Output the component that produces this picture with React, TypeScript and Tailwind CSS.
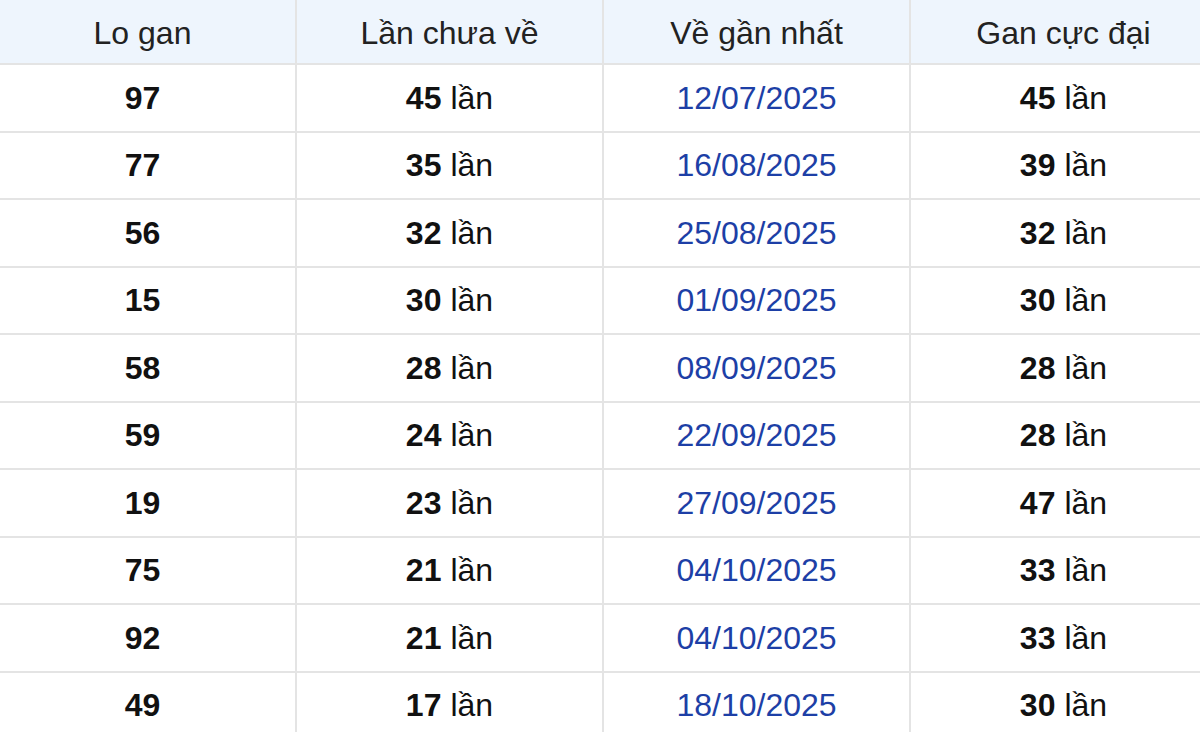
const rows = [
    { lo: "97", chua: "45", date: "12/07/2025", max: "45" },
    { lo: "77", chua: "35", date: "16/08/2025", max: "39" },
    { lo: "56", chua: "32", date: "25/08/2025", max: "32" },
    { lo: "15", chua: "30", date: "01/09/2025", max: "30" },
    { lo: "58", chua: "28", date: "08/09/2025", max: "28" },
    { lo: "59", chua: "24", date: "22/09/2025", max: "28" },
    { lo: "19", chua: "23", date: "27/09/2025", max: "47" },
    { lo: "75", chua: "21", date: "04/10/2025", max: "33" },
    { lo: "92", chua: "21", date: "04/10/2025", max: "33" },
    { lo: "49", chua: "17", date: "18/10/2025", max: "30" },
];

const cell =
    "flex items-center justify-center border-r-2 border-b-2 border-[#e4e4e4]";

const App = () => {
    return (
        <div
            className="h-[732px] w-[1200px] overflow-hidden bg-white text-[32px] text-[#111]"
            style={{ fontFamily: '"Liberation Sans", Arial, sans-serif' }}
        >
            <div className="-ml-[10px] grid w-[1228px] grid-cols-4">
                {["Lo gan", "Lần chưa về", "Về gần nhất", "Gan cực đại"].map(
                    (h) => (
                        <div
                            key={h}
                            className={`${cell} h-[65px] bg-[#eef5fd] pt-[3px] text-[#222]`}
                        >
                            {h}
                        </div>
                    ),
                )}
                {rows.map((r, i) => (
                    <Row key={i} {...r} />
                ))}
            </div>
        </div>
    );
};

export default App;

/* -------------------------------------------------------------------------- */

const Row = ({
    lo,
    chua,
    date,
    max,
}: {
    lo: string;
    chua: string;
    date: string;
    max: string;
}) => {
    return (
        <>
            <div className={`${cell} h-[67.5px] font-bold`}>{lo}</div>
            <div className={`${cell} h-[67.5px]`}>
                <b className="mr-[9px]">{chua}</b>lần
            </div>
            <div className={`${cell} h-[67.5px] text-[#1d3fa6]`}>{date}</div>
            <div className={`${cell} h-[67.5px]`}>
                <b className="mr-[9px]">{max}</b>lần
            </div>
        </>
    );
};
